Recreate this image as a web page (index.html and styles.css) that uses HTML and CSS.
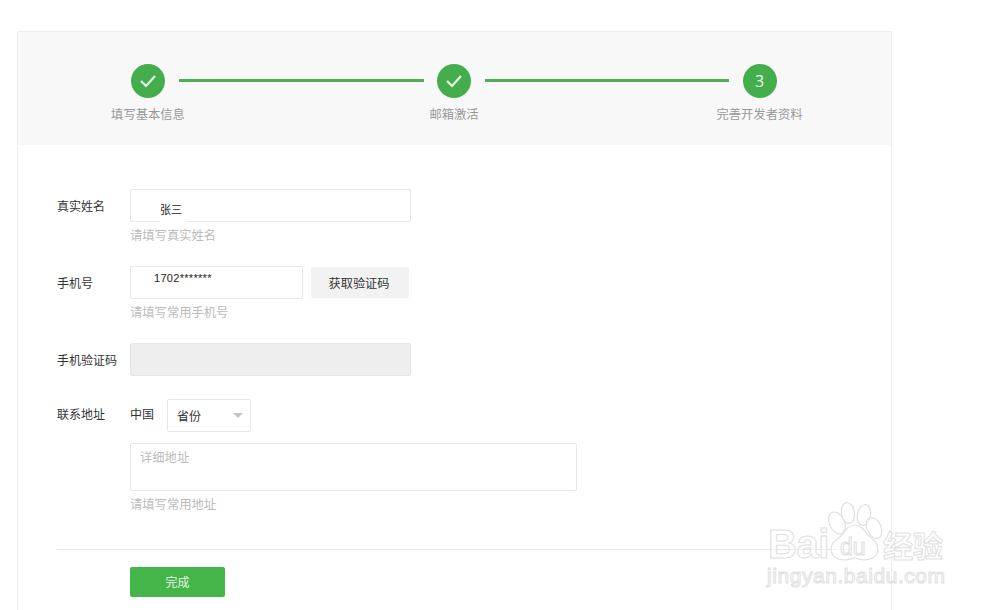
FILE: index.html
```html
<!DOCTYPE html>
<html lang="zh-CN">
<head>
<meta charset="utf-8">
<title>完善开发者资料</title>
<link rel="stylesheet" href="styles.css">
</head>
<body>
<main class="card">
  <header class="steps">
    <div class="step step-first">
      <span class="dot"><svg class="check" viewBox="0 0 18 14" width="18" height="14"><path d="M2 7l5 5 9-10" fill="none" stroke="#eaf7eb" stroke-width="2.2"/></svg></span>
      <span class="step-label">填写基本信息</span>
    </div>
    <div class="line line-a"></div>
    <div class="step step-mid">
      <span class="dot"><svg class="check" viewBox="0 0 18 14" width="18" height="14"><path d="M2 7l5 5 9-10" fill="none" stroke="#eaf7eb" stroke-width="2.2"/></svg></span>
      <span class="step-label">邮箱激活</span>
    </div>
    <div class="line line-b"></div>
    <div class="step">
      <span class="dot">3</span>
      <span class="step-label">完善开发者资料</span>
    </div>
  </header>

  <form class="form">
    <div class="row row-hinted">
      <div class="label">真实姓名</div>
      <div class="field">
        <div class="input input-wide input-name"><span class="patch">张三</span></div>
        <div class="hint">请填写真实姓名</div>
      </div>
    </div>
    <div class="row row-hinted">
      <div class="label">手机号</div>
      <div class="field">
        <div class="inline">
          <div class="input input-phone">1702*******</div>
          <div class="code-btn">获取验证码</div>
        </div>
        <div class="hint">请填写常用手机号</div>
      </div>
    </div>
    <div class="row row-plain">
      <div class="label">手机验证码</div>
      <div class="field">
        <div class="input input-wide input-disabled"></div>
      </div>
    </div>
    <div class="row">
      <div class="label label-addr">联系地址</div>
      <div class="field">
        <div class="inline inline-addr">
          <span class="country">中国</span>
          <div class="select"><span>省份</span><i class="caret"></i></div>
        </div>
        <div class="textarea">详细地址</div>
        <div class="hint">请填写常用地址</div>
      </div>
    </div>
    <div class="actions">
      <div class="submit">完成</div>
    </div>
  </form>
</main>

<div class="watermark">
  <svg class="paw" viewBox="0 0 200 100" width="200" height="100">
    <g fill="rgba(255,255,255,.55)" stroke="#e0e0e0" stroke-width="1.2">
      <ellipse cx="77" cy="23" rx="7.5" ry="11.5" transform="rotate(-25 77 23)"/>
      <ellipse cx="88" cy="13" rx="6.5" ry="10.5" transform="rotate(-8 88 13)"/>
      <ellipse cx="104" cy="15" rx="6.5" ry="10.5" transform="rotate(10 104 15)"/>
      <ellipse cx="114" cy="28" rx="7" ry="11" transform="rotate(-25 114 28)"/>
      <path d="M95 25c6 0 9 5 13 10 4 4 10 7 10 14 0 8-8 11-14 11-4 0-6-2-9-2s-6 2-11 2c-7 0-13-4-13-11 0-7 6-9 10-13 4-5 7-11 14-11z"/>
    </g>
  </svg>
  <div class="wm-top">
    <span class="wm-bai">Bai</span>
    <span class="wm-du">du</span>
    <span class="wm-cn">经验</span>
  </div>
  <div class="wm-url">jingyan.baidu.com</div>
</div>
</body>
</html>
```

FILE: styles.css
```css
* { box-sizing: border-box; }

html, body {
  margin: 0;
  height: 610px;
  overflow: hidden;
  background: #fff;
}

body {
  padding: 31px 0 0 17px;
  font-family: "Noto Sans CJK SC", "Liberation Sans", sans-serif;
  font-size: 12px;
  color: #333;
}

.card {
  width: 875px;
  height: 579px;
  border: 1px solid #eeeeee;
  border-bottom: 0;
  border-radius: 2px 2px 0 0;
}

.steps {
  display: flex;
  align-items: flex-start;
  height: 113px;
  padding: 32px 0 0 99px;
  background: #f8f8f8;
}

.step {
  flex: none;
  width: 61px;
  display: flex;
  flex-direction: column;
  align-items: center;
}

.step-first { width: 62px; }
.step-mid { padding-right: 1px; }

.dot {
  width: 34px;
  height: 34px;
  border-radius: 50%;
  background: #44ad4c;
  color: #eef8ef;
  display: flex;
  align-items: center;
  justify-content: center;
  font-family: "Open Sans", "Liberation Sans", sans-serif;
  font-size: 16px;
}

.step-label {
  margin-top: 7px;
  line-height: 18px;
  font-size: 12.3px;
  color: #999;
  white-space: nowrap;
}

.line {
  flex: none;
  height: 3px;
  margin-top: 15px;
  background: #4fae57;
}

.line-a { width: 245px; }
.line-b { width: 244px; }

.form {
  padding: 44px 39px 0;
}

.row {
  display: flex;
  align-items: flex-start;
}

.row-hinted { margin-bottom: 16px; }
.row-plain { margin-bottom: 23px; }

.label {
  flex: none;
  width: 73px;
  height: 33px;
  line-height: 34px;
  white-space: nowrap;
}

.label-addr { line-height: 30px; }

.field { flex: 1; min-width: 0; }

.inline {
  display: flex;
  align-items: center;
  gap: 8px;
}

.input {
  height: 33px;
  background: #fff;
  border: 1px solid #e7e7e7;
  border-radius: 2px;
}

.input-wide { width: 281px; }

.input-name {
  display: flex;
  align-items: flex-end;
  padding-left: 29px;
}

.patch {
  display: block;
  width: 27px;
  margin-bottom: -1px;
  padding-bottom: 3px;
  line-height: 20px;
  font-size: 11px;
  color: #222;
  background: #fff;
}

.input-phone {
  width: 173px;
  padding: 4px 0 0 23px;
  line-height: 14px;
  font-family: "Liberation Sans", sans-serif;
  font-size: 11px;
  letter-spacing: .3px;
  color: #222;
}

.input-disabled {
  background: #eeeeee;
  border-color: #e6e6e6;
}

.code-btn {
  width: 98px;
  height: 31px;
  padding-right: 2px;
  line-height: 32px;
  text-align: center;
  font-size: 12.2px;
  background: #f2f2f2;
  border-radius: 2px;
}

.hint {
  height: 28px;
  line-height: 26px;
  font-size: 12.3px;
  color: #bbb;
  white-space: nowrap;
}

.inline-addr {
  gap: 13px;
  margin-bottom: 11px;
}

.country { line-height: 30px; align-self: flex-start; }

.select {
  width: 84px;
  height: 33px;
  display: flex;
  align-items: center;
  justify-content: space-between;
  padding: 0 7px 0 9px;
  border: 1px solid #e7e7e7;
  border-radius: 2px;
  font-size: 12px;
}

.caret {
  width: 0;
  height: 0;
  border-left: 5px solid transparent;
  border-right: 5px solid transparent;
  border-top: 5px solid #c4c4c4;
}

.textarea {
  width: 447px;
  height: 48px;
  padding: 4px 9px;
  line-height: 18px;
  font-size: 12.3px;
  color: #bbb;
  border: 1px solid #e7e7e7;
  border-radius: 2px;
}

.actions {
  margin-top: 30px;
  padding: 17px 0 0 73px;
  border-top: 1px solid #e7e7e7;
}

.submit {
  width: 95px;
  height: 30px;
  line-height: 30px;
  text-align: center;
  color: #e8f6e9;
  background: #44b549;
  border-radius: 2px;
}

.watermark {
  position: absolute;
  left: 760px;
  top: 500px;
  width: 200px;
  height: 100px;
}

.paw {
  position: absolute;
  left: 0;
  top: 0;
}

.wm-top {
  position: absolute;
  left: 8px;
  top: 23px;
  width: 190px;
  height: 42px;
  font-family: "Liberation Sans", sans-serif;
  font-weight: 700;
  color: rgba(255, 255, 255, .55);
  -webkit-text-stroke: 1px #e0e0e0;
  white-space: nowrap;
}

.wm-bai {
  position: absolute;
  left: 0;
  top: 0;
  font-size: 40px;
  line-height: 42px;
  letter-spacing: -.5px;
}

.wm-du {
  position: absolute;
  left: 72px;
  top: 11px;
  font-size: 23px;
  line-height: 26px;
  font-weight: 400;
}

.wm-cn {
  position: absolute;
  left: 115px;
  top: 0;
  font-family: "Noto Sans CJK SC", sans-serif;
  font-size: 30px;
  line-height: 42px;
}

.wm-url {
  position: absolute;
  left: 7px;
  top: 64px;
  font-family: "Liberation Sans", sans-serif;
  font-size: 21px;
  line-height: 24px;
  letter-spacing: .55px;
  color: rgba(255, 255, 255, .55);
  -webkit-text-stroke: 1px #e0e0e0;
  white-space: nowrap;
}
```
